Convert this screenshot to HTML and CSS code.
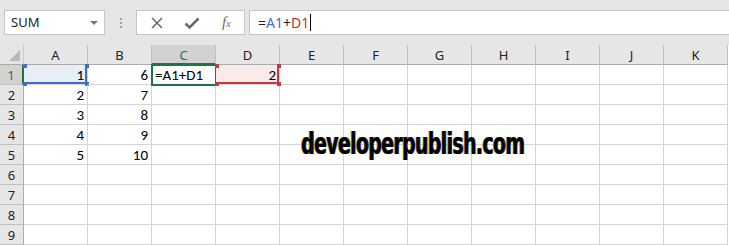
FILE: index.html
```html
<!DOCTYPE html>
<html lang="en">
<head>
    <meta charset="UTF-8">
    <title>Formula bar - SUM</title>
    <link rel="stylesheet" href="styles.css">
</head>
<body>
    <div class="topbar">
        <div class="namebox">SUM<span class="caret"></span></div>
        <div class="grip"><span></span><span></span><span></span></div>
        <div class="fx-buttons">
            <svg width="14" height="14" viewBox="0 0 14 14"><path d="M2 2 L12 12 M12 2 L2 12" stroke="#6a6a6a" stroke-width="1.6" fill="none"/></svg>
            <svg width="16" height="14" viewBox="0 0 16 14"><path d="M1.5 7.5 L5.5 11.5 L14.5 2.5" stroke="#6a6a6a" stroke-width="2.6" fill="none"/></svg>
            <span class="fx">f<small>x</small></span>
        </div>
        <div class="formula">=<span class="ref-a">A1</span>+<span class="ref-d">D1</span><span class="cursor"></span></div>
    </div>

    <div class="sheet">
        <div class="corner"></div>
        <div class="col-head">A</div>
        <div class="col-head">B</div>
        <div class="col-head active">C</div>
        <div class="col-head">D</div>
        <div class="col-head">E</div>
        <div class="col-head">F</div>
        <div class="col-head">G</div>
        <div class="col-head">H</div>
        <div class="col-head">I</div>
        <div class="col-head">J</div>
        <div class="col-head">K</div>
    </div>

    <div class="watermark">developerpublish.com</div>

    <script>
        // valores das colunas A e B, linhas 1 a 5
        const data = [[1, 6], [2, 7], [3, 8], [4, 9], [5, 10]];
        const sheet = document.querySelector('.sheet');

        for (let r = 1; r <= 9; r++) {
            const head = document.createElement('div');
            head.className = 'row-head' + (r === 1 ? ' active' : '');
            head.textContent = r;
            sheet.appendChild(head);

            for (let c = 0; c < 11; c++) {
                const cell = document.createElement('div');
                cell.className = 'cell';
                if (data[r - 1] && c < 2) {
                    cell.textContent = data[r - 1][c];
                }
                if (r === 1 && c === 0) cell.classList.add('ref-blue');
                if (r === 1 && c === 2) {
                    cell.classList.add('current');
                    cell.textContent = '=A1+D1';
                }
                if (r === 1 && c === 3) {
                    cell.classList.add('ref-red');
                    cell.textContent = '2';
                }
                sheet.appendChild(cell);
            }
        }

        // cantinhos das referências coloridas
        document.querySelectorAll('.ref-blue, .ref-red').forEach(cell => {
            ['tl', 'tr', 'bl', 'br'].forEach(pos => {
                const h = document.createElement('span');
                h.className = 'handle ' + pos;
                cell.appendChild(h);
            });
        });
    </script>
</body>
</html>
```

FILE: styles.css
```css
body {
    margin: 0;
    width: 729px;
    height: 245px;
    overflow: hidden;
    background-color: #fff;
    font-family: "Carlito", "Open Sans", "Liberation Sans", sans-serif;
    position: relative;
}

/* Barra de fórmulas */
.topbar {
    height: 45px;
    background-color: #e6e6e6;
    display: flex;
    align-items: flex-start;
    padding: 10px 0 0 4px;
    box-sizing: border-box;
}
.namebox {
    width: 101px;
    height: 25px;
    box-sizing: border-box;
    background-color: #fff;
    border: 1px solid #c6c6c6;
    font-family: "Noto Sans", "Open Sans", sans-serif;
    font-size: 13px;
    line-height: 23px;
    color: #222;
    padding-left: 6px;
    position: relative;
}
.caret {
    position: absolute;
    right: 6px;
    top: 10px;
    border-left: 4px solid transparent;
    border-right: 4px solid transparent;
    border-top: 4px solid #777;
}
.grip {
    width: 31px;
    height: 25px;
    display: flex;
    flex-direction: column;
    align-items: center;
    justify-content: center;
    gap: 2px;
}
.grip span {
    width: 2px;
    height: 2px;
    background-color: #a0a0a0;
}
.fx-buttons {
    width: 109px;
    height: 25px;
    box-sizing: border-box;
    background-color: #fff;
    border: 1px solid #c6c6c6;
    display: flex;
    align-items: center;
    padding-left: 13px;
    gap: 20px;
}
.fx {
    font-family: "Liberation Serif", serif;
    font-style: italic;
    font-size: 15px;
    color: #6a6a6a;
    margin-left: 2px;
}
.fx small {
    font-size: 10px;
}
.formula {
    flex: 1;
    height: 25px;
    box-sizing: border-box;
    margin-left: 4px;
    margin-right: -4px;
    background-color: #fff;
    border: 1px solid #c6c6c6;
    font-family: "Noto Sans", "Open Sans", sans-serif;
    font-size: 14px;
    line-height: 23px;
    padding-left: 8px;
    color: #222;
    display: flex;
}
.ref-a { color: #3c6fc8; }
.ref-d { color: #c9302c; }
.cursor {
    width: 1px;
    height: 17px;
    background-color: #000;
    margin: 3px 0 0 1px;
}

/* Planilha */
.sheet {
    display: grid;
    grid-template-columns: 24px repeat(11, 64px);
    grid-template-rows: 20px;
    grid-auto-rows: 20px;
}
.corner {
    background-color: #e6e6e6;
    border-right: 1px solid #c8c8c8;
    border-bottom: 1px solid #ababab;
    position: relative;
}
.corner::after {
    content: "";
    position: absolute;
    right: 3px;
    bottom: 3px;
    border-left: 11px solid transparent;
    border-bottom: 11px solid #b8b8b8;
}
.col-head {
    background-color: #e6e6e6;
    border-right: 1px solid #c0c0c0;
    border-bottom: 1px solid #ababab;
    font-family: "Noto Sans", "Open Sans", sans-serif;
    font-size: 13px;
    line-height: 20px;
    text-align: center;
    color: #222;
}
.col-head.active {
    background-color: #d2d2d2;
    border-bottom: 2px solid #217346;
    color: #217346;
}
.row-head {
    background-color: #e6e6e6;
    border-right: 1px solid #ababab;
    border-bottom: 1px solid #c0c0c0;
    font-family: "Noto Sans", "Open Sans", sans-serif;
    font-size: 13px;
    line-height: 20px;
    text-align: center;
    color: #222;
}
.row-head.active {
    background-color: #d2d2d2;
    border-right: 2px solid #217346;
    color: #217346;
}
.cell {
    border-right: 1px solid #d4d4d4;
    border-bottom: 1px solid #d4d4d4;
    font-size: 15px;
    line-height: 20px;
    text-align: right;
    padding-right: 3px;
    color: #000;
    position: relative;
}
.cell.current {
    text-align: left;
    padding-left: 3px;
    outline: 2px solid #217346;
    outline-offset: -1px;
    z-index: 2;
}
.cell.ref-blue {
    background-color: #e8eef8;
    box-shadow: inset 0 -2px 0 #3c6fc8, inset -2px 0 0 #3c6fc8;
}
.cell.ref-red {
    background-color: #fbeaea;
    box-shadow: inset 0 -2px 0 #c43b3f, inset -2px 0 0 #c43b3f;
    z-index: 3;
}
.handle {
    position: absolute;
    width: 4px;
    height: 4px;
}
.ref-blue .handle { background-color: #3c6fc8; }
.ref-red .handle { background-color: #c43b3f; }
.handle.tl { left: -1px; top: -1px; }
.handle.tr { right: -2px; top: -1px; }
.handle.bl { left: -1px; bottom: -2px; }
.handle.br { right: -2px; bottom: -2px; }

/* Marca d'água */
.watermark {
    position: absolute;
    left: 301px;
    top: 126px;
    font-family: "DejaVu Sans", sans-serif;
    font-weight: bold;
    font-size: 30px;
    letter-spacing: -1px;
    color: #000;
    transform: scaleX(0.63);
    transform-origin: left top;
    text-shadow: -1px 0 #c89a2a, 1px 0 #1a3f8a;
}
```
